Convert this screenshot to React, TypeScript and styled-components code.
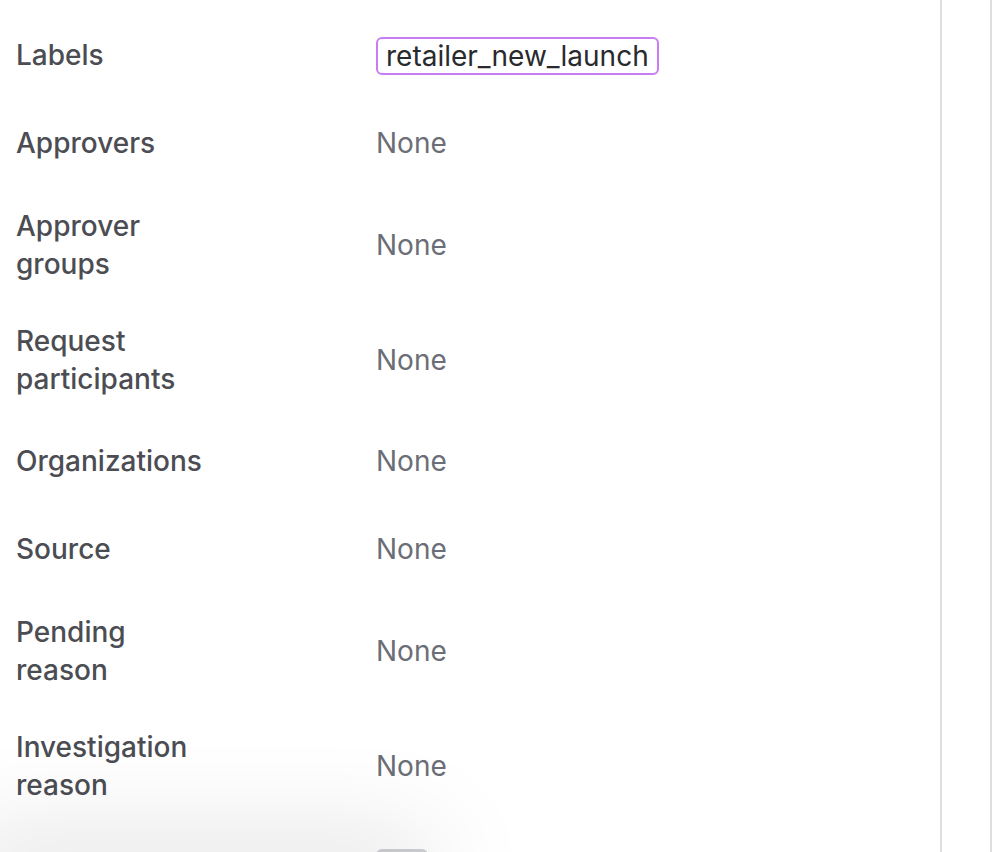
import React from "react";
import styled, { createGlobalStyle } from "styled-components";

const GlobalStyle = createGlobalStyle`
  html, body {
    margin: 0;
    padding: 0;
    width: 992px;
    height: 852px;
    overflow: hidden;
    background: #ffffff;
    font-family: Inter, "Noto Sans", "Liberation Sans", sans-serif;
  }
  * { box-sizing: border-box; }
`;

const Layout = styled.div`
  display: flex;
  width: 992px;
  height: 852px;
  position: relative;
  overflow: hidden;
`;

const Main = styled.main`
  flex: 1;
  border-right: 2px solid #dddee1;
  padding: 32px 0 0 16px;
  display: flex;
  flex-direction: column;
  gap: 40px;
`;

const Side = styled.aside`
  width: 50px;
  border-right: 2px solid #dddee1;
`;

const Row = styled.div`
  display: grid;
  grid-template-columns: 200px 1fr;
  column-gap: 160px;
  align-items: center;
  min-height: 48px;
  flex-shrink: 0;
`;

const Label = styled.div`
  font-size: 28px;
  line-height: 37.5px;
  font-weight: 500;
  color: #4b4d53;
`;

const Value = styled.div`
  font-size: 28px;
  line-height: 37.5px;
  font-weight: 400;
  color: #6b6e76;
`;

const Tag = styled.span<{ $tone?: "purple" | "gray" }>`
  display: inline-block;
  height: 38px;
  padding: 0 8px;
  border-radius: 6px;
  border: 2px solid ${(p) => (p.$tone === "gray" ? "#d0d1d4" : "#c97cf4")};
  background: ${(p) => (p.$tone === "gray" ? "#d0d1d4" : "#ffffff")};
  font-size: 28px;
  line-height: 34px;
  color: #292a2e;
  font-weight: 400;
  min-width: 52px;
`;

const Fade = styled.div`
  position: absolute;
  left: -40px;
  bottom: -30px;
  width: 470px;
  height: 30px;
  box-shadow: 0 0 100px 0 rgba(0, 0, 0, 0.26);
  pointer-events: none;
`;

type Field = { label: string; value?: string; tag?: string; tone?: "purple" | "gray" };

const fields: Field[] = [
  { label: "Labels", tag: "retailer_new_launch", tone: "purple" },
  { label: "Approvers", value: "None" },
  { label: "Approver groups", value: "None" },
  { label: "Request participants", value: "None" },
  { label: "Organizations", value: "None" },
  { label: "Source", value: "None" },
  { label: "Pending reason", value: "None" },
  { label: "Investigation reason", value: "None" },
  { label: "", tag: "\u00a0", tone: "gray" },
];

export default function App() {
  return (
    <>
      <GlobalStyle />
      <Layout>
        <Main>
          {fields.map((f, i) => (
            <Row key={i}>
              <Label>{f.label}</Label>
              {f.tag ? (
                <div>
                  <Tag $tone={f.tone}>{f.tag}</Tag>
                </div>
              ) : (
                <Value>{f.value}</Value>
              )}
            </Row>
          ))}
        </Main>
        <Side />
        <Fade />
      </Layout>
    </>
  );
}
